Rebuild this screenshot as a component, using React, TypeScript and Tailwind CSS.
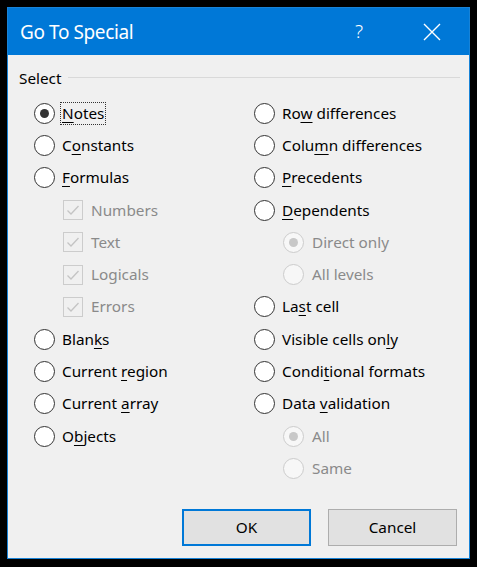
import React from 'react';

type Opt = { label: string; key?: number; kind: 'radio' | 'check' | 'sub'; checked?: boolean; disabled?: boolean };

// key = index of the access-key letter that gets underlined
const leftCol: Opt[] = [
    { label: 'Notes', key: 0, kind: 'radio', checked: true },
    { label: 'Constants', key: 1, kind: 'radio' },
    { label: 'Formulas', key: 0, kind: 'radio' },
    { label: 'Numbers', kind: 'check', checked: true, disabled: true },
    { label: 'Text', kind: 'check', checked: true, disabled: true },
    { label: 'Logicals', kind: 'check', checked: true, disabled: true },
    { label: 'Errors', kind: 'check', checked: true, disabled: true },
    { label: 'Blanks', key: 4, kind: 'radio' },
    { label: 'Current region', key: 8, kind: 'radio' },
    { label: 'Current array', key: 8, kind: 'radio' },
    { label: 'Objects', key: 1, kind: 'radio' },
];

const rightCol: Opt[] = [
    { label: 'Row differences', key: 2, kind: 'radio' },
    { label: 'Column differences', key: 4, kind: 'radio' },
    { label: 'Precedents', key: 0, kind: 'radio' },
    { label: 'Dependents', key: 0, kind: 'radio' },
    { label: 'Direct only', kind: 'sub', checked: true, disabled: true },
    { label: 'All levels', kind: 'sub', disabled: true },
    { label: 'Last cell', key: 2, kind: 'radio' },
    { label: 'Visible cells only', key: 16, kind: 'radio' },
    { label: 'Conditional formats', key: 5, kind: 'radio' },
    { label: 'Data validation', key: 5, kind: 'radio' },
    { label: 'All', kind: 'sub', checked: true, disabled: true },
    { label: 'Same', kind: 'sub', disabled: true },
];

function Label({ text, k }: { text: string; k?: number }) {
    if (k === undefined) return <>{text}</>;
    return (
        <>
            {text.slice(0, k)}
            <span className="underline underline-offset-[3px] decoration-1">{text[k]}</span>
            {text.slice(k + 1)}
        </>
    );
}

function Row({ opt }: { opt: Opt }) {
    const dim = opt.disabled;
    return (
        <div className={`h-[32.3px] flex items-center ${opt.kind === 'radio' ? '' : 'pl-[29px]'}`}>
            {opt.kind === 'check' ? (
                <div className="w-[20px] h-[20px] border border-[#cccccc] bg-[#f0f0f0] flex items-center justify-center">
                    <svg width="14" height="14" viewBox="0 0 14 14" fill="none">
                        <path d="M1.5 7.5 L5 11 L12.5 3" stroke="#c4c4c4" strokeWidth="1.3" />
                    </svg>
                </div>
            ) : (
                <div
                    className={`w-[21px] h-[21px] rounded-full border flex items-center justify-center ${
                        dim ? 'border-[#cccccc] bg-[#f7f7f7]' : 'border-[#333333] bg-white'
                    }`}
                >
                    {opt.checked && (
                        <div className={`w-[9px] h-[9px] rounded-full ${dim ? 'bg-[#c8c8c8]' : 'bg-[#333333]'}`} />
                    )}
                </div>
            )}
            <span
                className={`ml-[6px] px-[1px] leading-[21px] ${dim ? 'text-[#8a8a8a] ml-[7px]' : 'text-black'} ${
                    opt.checked && !dim ? 'outline outline-1 outline-dotted outline-[#333]' : ''
                }`}
            >
                <Label text={opt.label} k={opt.key} />
            </span>
        </div>
    );
}

export default function App() {
    return (
        <div className="w-[477px] h-[567px] bg-black pt-[7px] pl-[7px] pr-[7px] pb-[8px] font-['Noto_Sans','Liberation_Sans',sans-serif]">
            <div className="w-full h-full border border-[#1883d7] bg-[#f0f0f0] flex flex-col">
                {/* title bar */}
                <div className="h-[47px] bg-[#0078d7] flex items-center pl-[12px] text-white">
                    <span className="text-[19px] tracking-[-0.4px] mt-[2px]">Go To Special</span>
                    <span className="ml-auto mr-[60px] text-[19px] font-light">?</span>
                    <svg className="mr-[28px]" width="18" height="18" viewBox="0 0 18 18">
                        <path d="M1 1 L17 17 M17 1 L1 17" stroke="white" strokeWidth="1.4" />
                    </svg>
                </div>

                {/* body */}
                <div className="flex-1 flex flex-col text-[15.3px] text-black">
                    <div className="flex items-center pl-[11px] pr-[9px] h-[24px] mt-[11px]">
                        <span>Select</span>
                        <div className="flex-1 h-px bg-[#d9d9d9] ml-[7px] mt-[-2px]" />
                    </div>

                    <div className="grid grid-cols-[220px_1fr] pl-[26px] mt-[7px]">
                        <div className="flex flex-col">
                            {leftCol.map((o) => (
                                <Row key={o.label} opt={o} />
                            ))}
                        </div>
                        <div className="flex flex-col">
                            {rightCol.map((o) => (
                                <Row key={o.label + o.kind} opt={o} />
                            ))}
                        </div>
                    </div>

                    <div className="flex justify-end gap-[17px] pr-[12px] mt-[24px]">
                        <button className="w-[129px] h-[37px] bg-[#e1e1e1] border-2 border-[#0078d7] text-[15.3px]">OK</button>
                        <button className="w-[129px] h-[37px] bg-[#e1e1e1] border border-[#adadad] text-[15.3px]">Cancel</button>
                    </div>
                </div>
            </div>
        </div>
    );
}
